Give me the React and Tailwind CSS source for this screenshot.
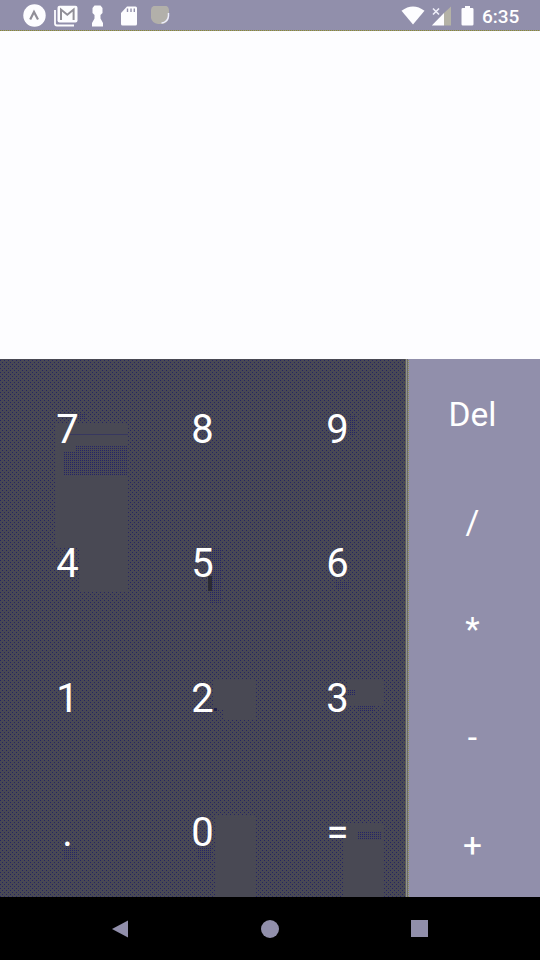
const DIGITS = ['7', '8', '9', '4', '5', '6', '1', '2', '3', '.', '0', '='];
const OPERATORS = ['Del', '/', '*', '-', '+'];

// Plain areas and denser areas of the keypad texture: x, y, width, height.
const PLAIN = [
  [55, 64, 73, 125],
  [80, 189, 48, 44],
  [214, 321, 42, 30],
  [223, 351, 33, 9],
  [347, 321, 37, 25],
  [215, 456, 41, 82],
  [343, 464, 41, 74],
];
const DENSE = [
  [76, 86, 52, 6],
  [64, 92, 64, 24],
  [78, 54, 8, 6],
  [68, 200, 6, 10],
  [350, 56, 6, 20],
  [210, 188, 12, 56],
  [336, 222, 14, 8],
  [348, 330, 8, 6],
  [358, 347, 16, 6],
  [358, 473, 24, 8],
  [64, 488, 14, 12],
  [198, 488, 14, 12],
];

function KeypadTexture() {
  return (
    <svg className="absolute inset-0" width="405" height="538" viewBox="0 0 405 538" shapeRendering="crispEdges">
      <defs>
        <pattern id="sparse" width="4" height="4" patternUnits="userSpaceOnUse">
          <rect width="4" height="4" fill="#494954" />
          <rect x="0" y="1" width="1" height="1" fill="#242462" />
          <rect x="2" y="3" width="1" height="1" fill="#242462" />
        </pattern>
        <pattern id="dense" width="2" height="2" patternUnits="userSpaceOnUse">
          <rect width="2" height="2" fill="#494954" />
          <rect x="0" y="1" width="1" height="1" fill="#242466" />
        </pattern>
      </defs>
      <rect width="405" height="538" fill="url(#sparse)" />
      {PLAIN.map(([x, y, w, h]) => (
        <rect key={`${x}-${y}`} x={x} y={y} width={w} height={h} fill="#494954" />
      ))}
      {DENSE.map(([x, y, w, h]) => (
        <rect key={`${x}-${y}`} x={x} y={y} width={w} height={h} fill="url(#dense)" />
      ))}
      <rect x="70" y="75" width="58" height="1" fill="#37375f" />
      <rect x="208" y="217" width="4" height="15" fill="#2a2a34" />
      <rect x="214" y="349" width="3" height="3" fill="#20204a" />
    </svg>
  );
}

function StatusBar() {
  return (
    <header className="h-[30px] shrink-0 bg-[#918fab] flex items-center justify-between pl-[23px] pr-[20px] text-white">
      <div className="flex items-center pt-px">
        <svg width="23" height="23" viewBox="0 0 23 23">
          <circle cx="11.5" cy="11.5" r="11.2" fill="#fdfdff" />
          <path d="M7.2 15.5 11 8l4 7.5" fill="none" stroke="#918f98" strokeWidth="2.2" />
        </svg>
        <svg className="ml-[8px]" width="24" height="22" viewBox="0 0 24 22">
          <path d="M1 5v13.5q0 2 2 2h17" fill="none" stroke="#fdfdff" strokeWidth="1.8" />
          <rect x="3.5" y="0.8" width="20" height="16.8" rx="2" fill="#fdfdff" />
          <path d="M7 15V4.500l6.300 5.200 6.300-5.200V15" fill="none" stroke="#918f98" strokeWidth="2" />
        </svg>
        <svg className="ml-[13px]" width="13" height="22" viewBox="0 0 13 22">
          <path d="M3.500 .5h6L11.500 3v5L9.500 10v3.500L12 18v3.500H1V18l2.500-4.500V10L1.500 8V3z" fill="#fdfdff" />
        </svg>
        <svg className="ml-[17px]" width="16" height="20" viewBox="0 0 16 20">
          <path d="M6 .5h8.500q1.500 0 1.500 1.500v16q0 1.500-1.500 1.500h-13Q0 19.500 0 18V7z" fill="#fdfdff" />
          <path d="M6.500 2.500v3.500M10 2.500v3.500M13.300 2.500v3.500" stroke="#918fab" strokeWidth="1.4" />
        </svg>
        <svg className="ml-[13px]" width="21" height="21" viewBox="0 0 21 21">
          <path d="M3.500 1h13q2.500 1 2.500 5v6q-1 6-6 7H8q-6-1-7-6V5q0-3 2.500-4z" fill="#b2b0aa" />
          <path d="M18.500 8q.5 6-3 8.500-2 1.500-4 1.500" fill="none" stroke="#eeeeff" strokeWidth="1.500" />
        </svg>
      </div>
      <div className="flex items-center pt-px">
        <svg width="24" height="19" viewBox="0 0 24 19">
          <path d="M.5 4.800Q12-3.800 23.500 4.800L12 18.500z" fill="#fdfdff" />
        </svg>
        <svg className="ml-[6px]" width="21" height="20" viewBox="0 0 21 20">
          <path d="M20 .5V19.500h-7V7z" fill="#b4b2a6" />
          <path d="M13 7v12.500H.8z" fill="#fdfdff" />
          <path d="m2 2.500 6 6M8 2.500l-6 6" stroke="#f0f0fa" strokeWidth="1.600" />
        </svg>
        <svg className="ml-[9px]" width="13" height="20" viewBox="0 0 13 20">
          <path d="M4 0h5v2h2.200q1.300 0 1.300 1.300v14.900q0 1.300-1.300 1.300H1.800Q.5 19.500.5 18.200V3.300Q.5 2 1.800 2H4z" fill="#fdfdff" />
        </svg>
        <span className="ml-[8px] w-[38px] pt-[2px] text-[19px] leading-[20px] font-medium whitespace-nowrap">6:35</span>
      </div>
    </header>
  );
}

export default function App() {
  return (
    <div className="w-[540px] h-[960px] flex flex-col overflow-hidden bg-black text-white font-[Roboto,sans-serif]">
      <StatusBar />
      <div className="h-px shrink-0 bg-[repeating-linear-gradient(90deg,#8c8c30_0_1px,#918f94_1px_2px)]" />
      <section className="h-[328px] shrink-0 bg-[#fdfdff]" />
      <main className="h-[538px] shrink-0 flex">
        <section className="relative w-[405px]">
          <KeypadTexture />
          <div className="relative h-full grid grid-cols-3 grid-rows-4">
            {DIGITS.map((d) => (
              <button key={d} className="flex items-center justify-center text-[40px] leading-[47px] pt-[6px]">
                {d}
              </button>
            ))}
          </div>
        </section>
        <section className="w-[135px] flex bg-[#918fab]">
          <div className="w-px bg-[#606054]" />
          <div className="w-px bg-[#8f8f90]" />
          <div className="w-px bg-[#6b6b6b]" />
          <div className="w-px bg-[repeating-linear-gradient(#918fab_0_1px,#919155_1px_2px)]" />
          <div className="flex-1 pr-[4px] grid grid-rows-5">
            {OPERATORS.map((op) => (
              <button key={op} className="flex items-center justify-center text-[33.5px] leading-[40px] pt-[5px]">
                {op}
              </button>
            ))}
          </div>
        </section>
      </main>
      <nav className="flex-1 flex items-center justify-between px-[112px] bg-black">
        <svg width="17" height="18" viewBox="0 0 17 18">
          <path d="M0 9 16 .5v17z" fill="#918fab" />
        </svg>
        <span className="size-[18px] rounded-full bg-[#918fab]" />
        <span className="size-[17px] bg-[#918fab]" />
      </nav>
    </div>
  );
}
